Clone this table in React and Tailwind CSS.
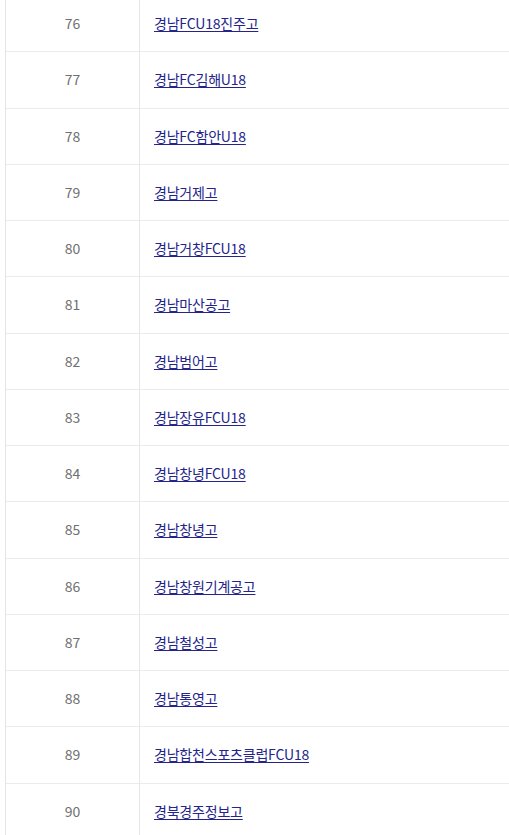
const rows = [
  [76, "경남FCU18진주고"],
  [77, "경남FC김해U18"],
  [78, "경남FC함안U18"],
  [79, "경남거제고"],
  [80, "경남거창FCU18"],
  [81, "경남마산공고"],
  [82, "경남범어고"],
  [83, "경남장유FCU18"],
  [84, "경남창녕FCU18"],
  [85, "경남창녕고"],
  [86, "경남창원기계공고"],
  [87, "경남철성고"],
  [88, "경남통영고"],
  [89, "경남합천스포츠클럽FCU18"],
  [90, "경북경주정보고"],
];

export default function App() {
  return (
    <div className="h-[835px] overflow-hidden bg-white font-['Noto_Sans_CJK_KR','Noto_Sans',sans-serif] text-[14px]">
      <div className="-mt-[4px] ml-[5px] border-l border-[#e6e6e6]">
        {rows.map(([no, name]) => (
          <div key={no} className="flex h-[56.25px] border-b-[1.5px] border-[#ebebeb]">
            <div className="flex w-[134px] shrink-0 items-center justify-center border-r border-[#e6e6e6] text-[#707070]">
              {no}
            </div>
            <div className="flex flex-1 items-center pl-[14px]">
              <a href="#" className="tracking-[-0.2px] text-[#24248a] underline underline-offset-[2px]">
                {name}
              </a>
            </div>
          </div>
        ))}
      </div>
    </div>
  );
}
